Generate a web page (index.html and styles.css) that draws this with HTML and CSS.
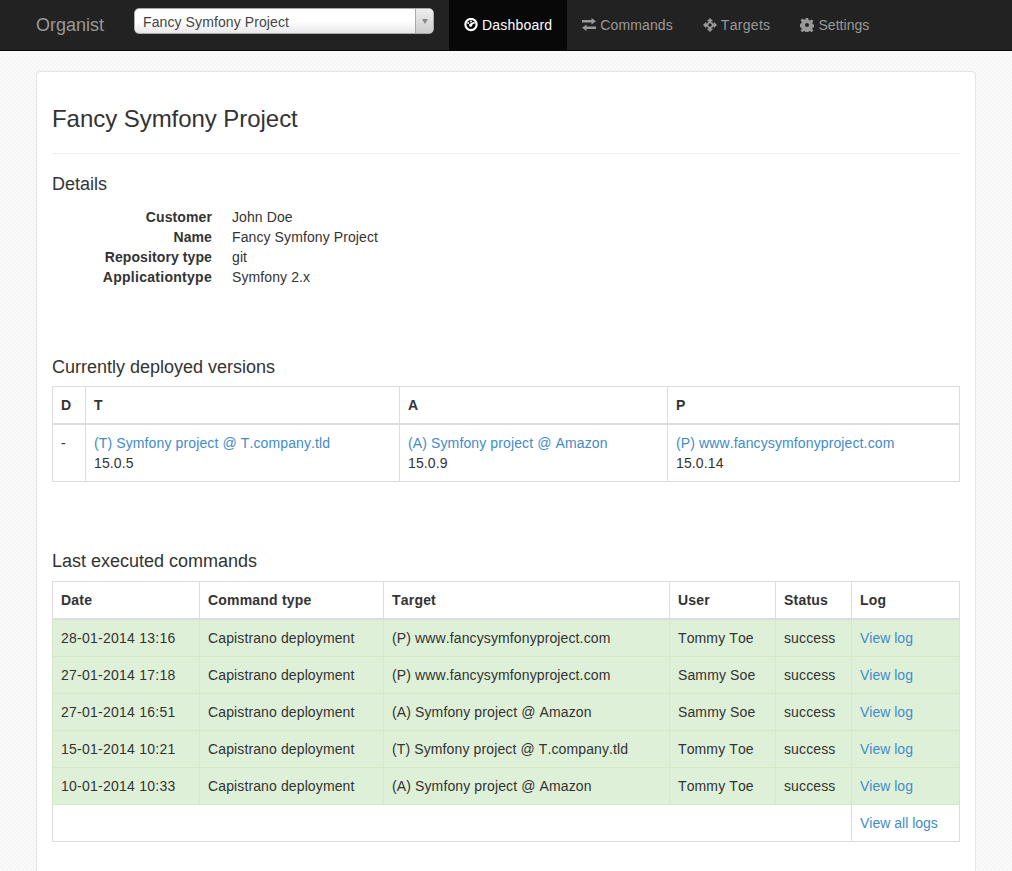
FILE: index.html
```html
<!DOCTYPE html>
<html lang="en">
<head>
<meta charset="utf-8">
<title>Organist</title>
<link rel="stylesheet" href="styles.css">
</head>
<body>
<nav class="navbar">
  <a class="brand">Organist</a>
  <div class="select"><span class="select-text">Fancy Symfony Project</span><span class="select-arrow"><i class="caret"></i></span></div>
  <ul class="nav">
    <li class="active item-dashboard"><a><svg class="icon" viewBox="0 0 14 14"><circle cx="7" cy="6.500" r="5.600" fill="none" stroke="currentColor" stroke-width="2.200"/><circle cx="7" cy="3.500" r="1" fill="currentColor"/><circle cx="4.200" cy="5" r="1" fill="currentColor"/><circle cx="9.800" cy="5" r="1" fill="currentColor"/><path d="M10 3.800L8.200 7.400a1.600 1.600 0 1 1-1.800-1.800z" fill="currentColor"/></svg>Dashboard</a></li>
    <li class="item-commands"><a><svg class="icon" viewBox="0 0 14 14"><path d="M0 2h9.500V0L14 3.200 9.500 6.400v-2H0zM14 8.500H4.500v-2L0 9.700l4.500 3.200v-2H14z" fill="currentColor"/></svg>Commands</a></li>
    <li class="item-targets"><a><svg class="icon" viewBox="0 0 14 14"><path fill-rule="evenodd" d="M7 0l3.200 3.200H8.400v.7a3.300 3.300 0 0 1 1.700 1.700h.7V3.800L14 7l-3.200 3.200V8.400h-.7a3.300 3.300 0 0 1-1.700 1.700v.7h1.800L7 14l-3.200-3.200h1.800v-.7a3.300 3.300 0 0 1-1.700-1.700h-.7v1.800L0 7l3.200-3.200v1.800h.7a3.300 3.300 0 0 1 1.700-1.700v-.7H3.800zM7 5.300a1.700 1.700 0 1 0 0 3.400 1.700 1.700 0 0 0 0-3.400z" fill="currentColor"/></svg>Targets</a></li>
    <li class="item-settings"><a><svg class="icon" viewBox="0 0 14 14"><path fill-rule="evenodd" d="M5.800 0h2.400l.4 2 1.300.6 1.800-1.200 1.700 1.700-1.200 1.800.6 1.300 2 .4v2.400l-2 .4-.6 1.300 1.200 1.800-1.700 1.700-1.800-1.200-1.300.6-.4 2H5.800l-.4-2-1.300-.6-1.800 1.200-1.700-1.700 1.200-1.800-.6-1.300-2-.4V5.800l2-.4.600-1.300-1.200-1.800 1.700-1.700 1.800 1.200 1.300-.6zM7 5a2 2 0 1 0 0 4 2 2 0 0 0 0-4z" fill="currentColor"/></svg>Settings</a></li>
  </ul>
</nav>
<main class="well">
  <h1 class="page-title">Fancy Symfony Project</h1>
  <h2 class="section section-details">Details</h2>
  <dl class="details">
    <dt>Customer</dt><dd>John Doe</dd>
    <dt>Name</dt><dd>Fancy Symfony Project</dd>
    <dt>Repository type</dt><dd>git</dd>
    <dt class="wide">Applicationtype</dt><dd>Symfony 2.x</dd>
  </dl>
  <h2 class="section section-versions">Currently deployed versions</h2>
  <table class="table versions">
    <colgroup><col class="v1"><col class="v2"><col class="v3"><col class="v4"></colgroup>
    <thead><tr><th>D</th><th>T</th><th>A</th><th>P</th></tr></thead>
    <tbody><tr>
      <td>-</td>
      <td><a>(T) Symfony project @ T.company.tld</a><br>15.0.5</td>
      <td><a>(A) Symfony project @ Amazon</a><br>15.0.9</td>
      <td><a>(P) www.fancysymfonyproject.com</a><br>15.0.14</td>
    </tr></tbody>
  </table>
  <h2 class="section section-commands">Last executed commands</h2>
  <table class="table commands">
    <colgroup><col class="c1"><col class="c2"><col class="c3"><col class="c4"><col class="c5"><col class="c6"></colgroup>
    <thead><tr><th>Date</th><th>Command type</th><th>Target</th><th>User</th><th>Status</th><th>Log</th></tr></thead>
    <tbody>
      <tr class="success"><td class="date">28-01-2014 13:16</td><td>Capistrano deployment</td><td>(P) www.fancysymfonyproject.com</td><td>Tommy Toe</td><td>success</td><td><a class="log">View log</a></td></tr>
      <tr class="success"><td class="date">27-01-2014 17:18</td><td>Capistrano deployment</td><td>(P) www.fancysymfonyproject.com</td><td>Sammy Soe</td><td>success</td><td><a class="log">View log</a></td></tr>
      <tr class="success"><td class="date">27-01-2014 16:51</td><td>Capistrano deployment</td><td>(A) Symfony project @ Amazon</td><td>Sammy Soe</td><td>success</td><td><a class="log">View log</a></td></tr>
      <tr class="success"><td class="date">15-01-2014 10:21</td><td>Capistrano deployment</td><td>(T) Symfony project @ T.company.tld</td><td>Tommy Toe</td><td>success</td><td><a class="log">View log</a></td></tr>
      <tr class="success"><td class="date">10-01-2014 10:33</td><td>Capistrano deployment</td><td>(A) Symfony project @ Amazon</td><td>Tommy Toe</td><td>success</td><td><a class="log">View log</a></td></tr>
      <tr><td colspan="5"></td><td><a class="log">View all logs</a></td></tr>
    </tbody>
  </table>
</main>
</body>
</html>
```

FILE: styles.css
```css
* { box-sizing: border-box; }
html, body { margin: 0; height: 871px; overflow: hidden; }
body {
  font-family: "Liberation Sans", Arial, sans-serif;
  font-size: 14px;
  line-height: 20px;
  font-kerning: none;
  color: #333;
  background-color: #f8f8f8;
  background-image: repeating-conic-gradient(#f5f5f5 0 25%, #fafafa 0 50%);
  background-size: 4px 4px;
}
.navbar {
  height: 51px;
  background: #222;
  border-bottom: 1px solid #080808;
  display: flex;
  align-items: flex-start;
  padding-left: 36px;
}
.brand { font-size: 18px; line-height: 50px; color: #999; width: 98px; }
.select {
  width: 300px;
  height: 26px;
  margin-top: 8px;
  display: flex;
  border: 1px solid #aaa;
  border-radius: 5px;
  background: linear-gradient(#fff 50%, #e8e8e8);
  color: #444;
  line-height: 26px;
  letter-spacing: .1px;
  overflow: hidden;
}
.select-text { flex: 1; padding-left: 8px; }
.select-arrow {
  width: 18px;
  border-left: 1px solid #aaa;
  background: linear-gradient(#eee, #ccc);
  display: flex;
  align-items: center;
  justify-content: center;
}
.caret { width: 0; height: 0; border: 3.5px solid transparent; border-top: 5px solid #888; border-bottom: 0; }
.nav { list-style: none; display: flex; margin: 0 0 0 15px; padding: 0; }
.nav a { display: flex; align-items: center; height: 50px; padding: 0 15px; color: #999; }
.nav .active a { background: #080808; color: #fff; }
.item-dashboard { letter-spacing: .2px; }
.item-commands { letter-spacing: .12px; }
.item-settings { letter-spacing: .05px; }
.item-targets { letter-spacing: .3px; }
.icon { width: 14px; height: 14px; margin-right: 4px; }
.well {
  width: 940px;
  height: 900px;
  margin: 20px 0 0 36px;
  padding: 0 15px;
  background: #fff;
  border: 1px solid #e3e3e3;
  border-radius: 4px;
}
.page-title {
  margin: 0 0 20px;
  padding: 30px 0 18px;
  height: 82px;
  font-size: 24px;
  line-height: 34px;
  font-weight: 500;
  letter-spacing: -.05px;
  border-bottom: 1px solid #eee;
}
.section { margin: 0; font-size: 18px; line-height: 20px; font-weight: 500; }
.section-details { padding-bottom: 13px; }
.section-versions { padding-bottom: 9px; }
.section-commands { padding-bottom: 10px; }
.details { margin: 0 0 70px; display: grid; grid-template-columns: 160px 1fr; column-gap: 20px; }
.details dt { text-align: right; font-weight: 700; letter-spacing: .1px; }
.details dt.wide { letter-spacing: .28px; }
.details dd { margin: 0; letter-spacing: .1px; }
.table { width: 907px; border-collapse: collapse; table-layout: fixed; border: 1px solid #ddd; }
.table th, .table td { padding: 8px; border: 1px solid #ddd; text-align: left; vertical-align: top; line-height: 20px; }
.table th { letter-spacing: .2px; }
.table td { letter-spacing: .12px; }
.table td.date { letter-spacing: .25px; }
.table td .log { letter-spacing: 0; }
.table thead th { border-bottom-width: 2px; }
.versions { margin-bottom: 69px; }
.v1 { width: 33px; } .v2 { width: 314px; } .v3 { width: 268px; } .v4 { width: 292px; }
.c1 { width: 147px; } .c2 { width: 184px; } .c3 { width: 286px; } .c4 { width: 106px; } .c5 { width: 76px; } .c6 { width: 108px; }
.success td { background: #dff0d8; border-color: #d6e9c6; }
td a { color: #428bca; }
```
